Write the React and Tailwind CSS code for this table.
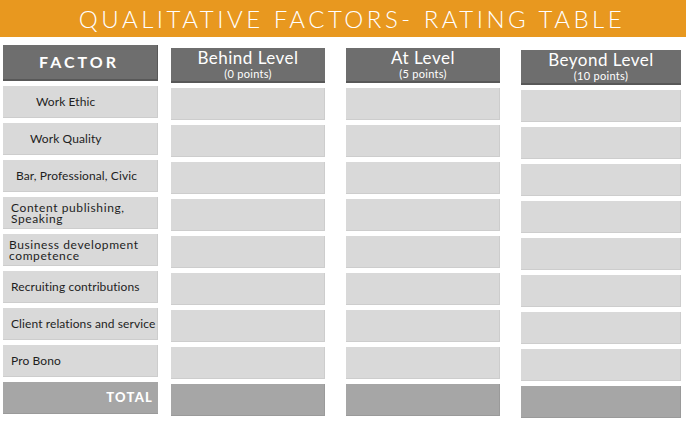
import React from "react";

const factors = [
  { label: "Work Ethic", pad: "pl-[33px]" },
  { label: "Work Quality", pad: "pl-[27px]" },
  { label: "Bar, Professional, Civic", pad: "pl-[13px]" },
  { label: "Content publishing,\nSpeaking", pad: "pl-[8px]", tight: true },
  { label: "Business development\ncompetence", pad: "pl-[6px]", tight: true },
  { label: "Recruiting contributions", pad: "pl-[8px]" },
  { label: "Client relations and service", pad: "pl-[8px]" },
  { label: "Pro Bono", pad: "pl-[8px]" },
];

const levels = [
  { title: "Behind Level", points: "(0 points)", width: "w-[154px]", ml: "ml-[13px]", mt: "mt-[11px]" },
  { title: "At Level", points: "(5 points)", width: "w-[154px]", ml: "ml-[21px]", mt: "mt-[11px]" },
  { title: "Beyond Level", points: "(10 points)", width: "w-[160px]", ml: "ml-[21px]", mt: "mt-[13px]" },
];

const Cell = ({ children, className = "" }) => (
  <div className={`h-[32px] bg-[#d9d9d9] border-b border-r border-[#cdcdcd] ${className}`}>{children}</div>
);

const App = () => {
  return (
    <div className="w-[686px] h-[421px] bg-white overflow-hidden font-['Lato',sans-serif]">
      <div className="h-[37px] bg-[#e8981f] flex items-center justify-center">
        <h1 className="text-[24px] font-light text-white tracking-[3.5px] leading-none pl-[18px]">
          QUALITATIVE FACTORS- RATING TABLE
        </h1>
      </div>

      <div className="flex pl-[3px]">
        <div className="w-[155px] mt-[8px] flex flex-col gap-[5px]">
          <div className="h-[36px] bg-[#6e6e6e] border-b-2 border-r border-[#585858] flex items-center justify-center">
            <span className="text-white font-bold text-[16px] tracking-[3px] pr-[2px]">FACTOR</span>
          </div>
          {factors.map((f) => (
            <Cell key={f.label} className={`flex items-center ${f.pad}`}>
              <span
                className={`whitespace-pre text-[#1e1e1e] ${
                  f.tight ? "text-[12px] leading-[11px] tracking-[0.6px]" : "text-[12px] tracking-[0.1px]"
                }`}
              >
                {f.label}
              </span>
            </Cell>
          ))}
          <div className="h-[32px] bg-[#a6a6a6] border-b border-[#9a9a9a] flex items-center justify-end pr-[5px]">
            <span className="text-white font-black text-[13px] tracking-[1.2px]">TOTAL</span>
          </div>
        </div>

        {levels.map((l) => (
          <div key={l.title} className={`${l.width} ${l.ml} ${l.mt} flex flex-col gap-[5px]`}>
            <div className="h-[35px] bg-[#6e6e6e] border-b-2 border-[#585858] flex flex-col items-center justify-center">
              <span className="text-white text-[17px] leading-[18px] tracking-[0.5px]">{l.title}</span>
              <span className="text-white text-[11px] leading-[13px] tracking-[0.3px]">{l.points}</span>
            </div>
            {factors.map((f) => (
              <Cell key={f.label} />
            ))}
            <div className="h-[32px] bg-[#a6a6a6] border-b border-r border-[#9a9a9a]" />
          </div>
        ))}
      </div>
    </div>
  );
};

export default App;
